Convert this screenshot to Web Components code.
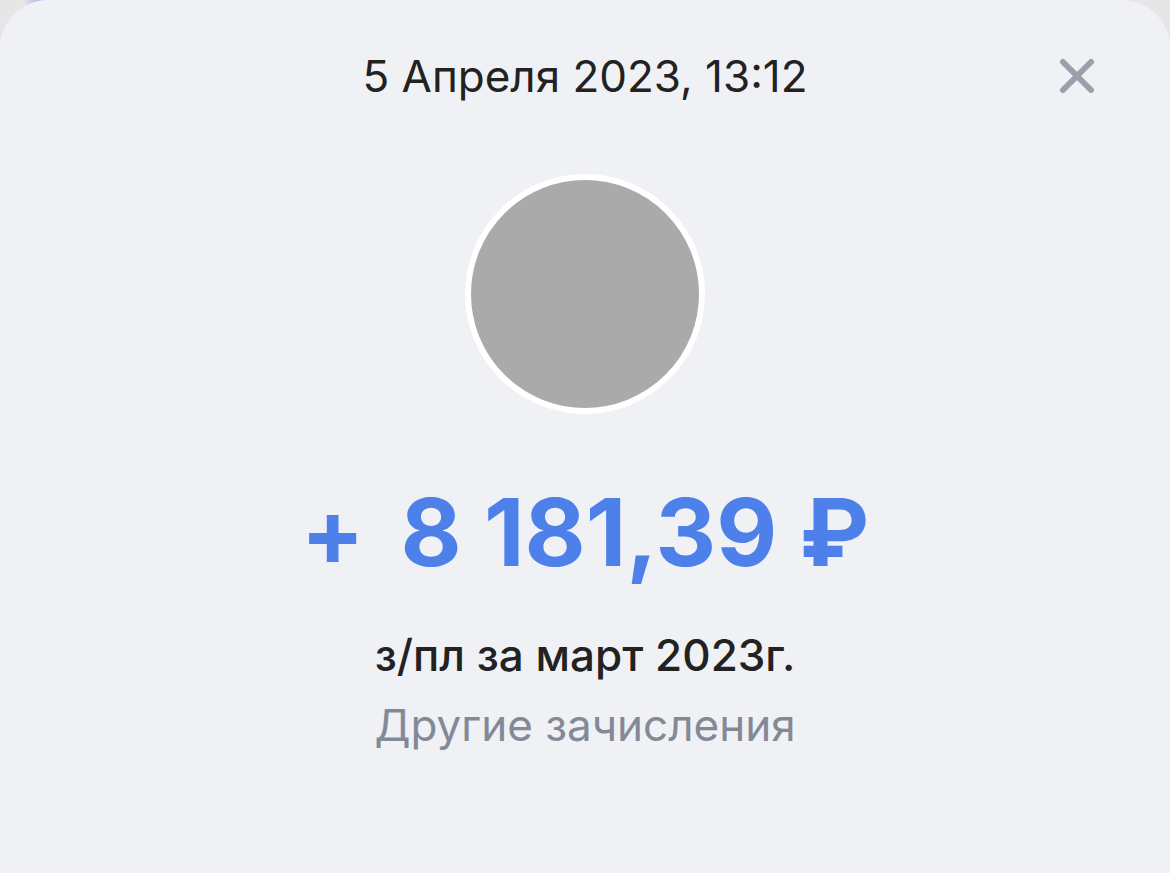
<!DOCTYPE html>
<html lang="ru">
<head>
<meta charset="utf-8">
<meta name="viewport" content="width=device-width, initial-scale=1">
<title>Операция</title>
<style>
  body { margin: 0; background: #fff; font-family: Inter, "Liberation Sans", sans-serif; color: #222; }
</style>
</head>
<body>
<operation-sheet>
  <sheet-header slot="header">5 Апреля 2023, 13:12</sheet-header>
  <operation-avatar></operation-avatar>
  <operation-amount><span slot="sign">+</span> 8 181,39 ₽</operation-amount>
  <operation-details>
    з/пл за март 2023г.
    <span slot="category">Другие зачисления</span>
  </operation-details>
</operation-sheet>
<script>
  const define = (name, markup) => {
    const template = document.createElement('template');
    template.innerHTML = markup;
    customElements.define(name, class extends HTMLElement {
      constructor() {
        super();
        this.attachShadow({ mode: 'open' }).append(template.content.cloneNode(true));
      }
    });
  };

  define('operation-sheet', `
    <style>
      :host { display: block; background: linear-gradient(90deg, #e6e6e6 24px, #b9c4ea 36px, #e6e6e6 60px); }
      main {
        display: flex; flex-direction: column; align-items: center;
        padding-bottom: 113px; border-radius: 48px 48px 0 0; background: #eff1f5;
      }
      slot[name="header"] { display: block; align-self: stretch; }
    </style>
    <main><slot name="header"></slot><slot></slot></main>
  `);

  define('sheet-header', `
    <style>
      :host { display: block; }
      header {
        display: grid; grid-template-columns: 56px 1fr 56px; align-items: center;
        padding: 48px 65px 0;
      }
      h1 { grid-column: 2; margin: 0; font-size: 44px; line-height: 56px; font-weight: 400; text-align: center; }
      button {
        display: grid; place-items: center; height: 56px; padding: 0;
        border: 0; background: none; color: #9b9fac; cursor: pointer;
      }
      svg { width: 36px; height: 36px; }
    </style>
    <header>
      <h1><slot></slot></h1>
      <button type="button" aria-label="Закрыть">
        <svg viewBox="0 0 36 36" fill="none" stroke="currentColor" stroke-width="6" stroke-linecap="round" aria-hidden="true">
          <path d="M4 4 32 32M32 4 4 32"/>
        </svg>
      </button>
    </header>
  `);

  define('operation-avatar', `
    <style>
      :host {
        display: block; box-sizing: border-box; width: 240px; height: 240px; margin-top: 70px;
        border: 6px solid #fff; border-radius: 50%; background: #aaa;
      }
    </style>
  `);

  define('operation-amount', `
    <style>
      :host {
        display: flex; justify-content: center; gap: 36px; margin-top: 60px;
        color: #4e80ea; font-size: 94px; line-height: 116px; font-weight: 700;
      }
    </style>
    <slot name="sign"></slot>
    <div><slot></slot></div>
  `);

  define('operation-details', `
    <style>
      :host { display: block; margin-top: 30px; text-align: center; line-height: 70px; }
      h2, p { margin: 0; font-size: 44px; }
      h2 { font-weight: 500; }
      p { color: #838997; }
    </style>
    <h2><slot></slot></h2>
    <p><slot name="category"></slot></p>
  `);
</script>
</body>
</html>
